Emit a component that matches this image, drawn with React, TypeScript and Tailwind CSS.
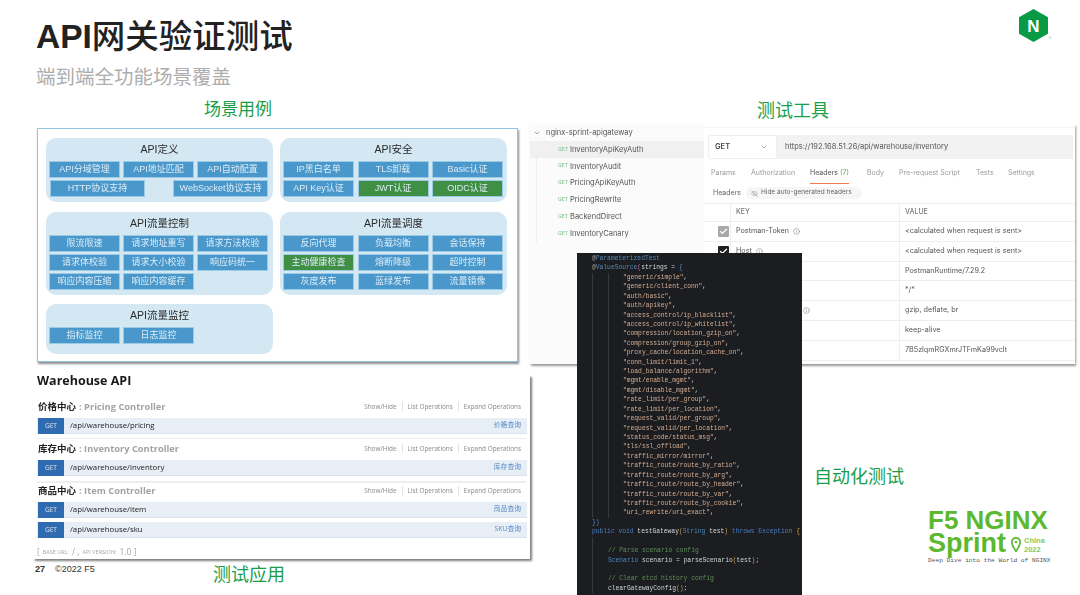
import { ChevronDown, Check, Info, EyeOff } from "lucide-react";

const cjk = "font-['Liberation_Sans','Noto_Sans_CJK_SC',sans-serif]";
const openSans = "font-['Open_Sans','Noto_Sans_CJK_SC',sans-serif]";

type Chip = { label: string; green?: boolean };

function ChipBox({ label, green, wide }: Chip & { wide?: boolean }) {
  return (
    <div
      className={`h-[17px] flex items-center justify-center border border-[#9ccbe6] text-[9px] text-[#dcecf6] whitespace-nowrap ${
        green ? "bg-[#3f8f44] text-[#d8ecd8]" : "bg-[#4a98cb]"
      } ${wide ? "w-[95px]" : ""}`}
    >
      {label}
    </div>
  );
}

function Group({ title, className, children }: { title: string; className: string; children: React.ReactNode }) {
  return (
    <div className={`rounded-[10px] bg-[#d4e8f4] ${className}`}>
      <div className="h-[23px] flex items-center justify-center text-[10.5px] text-[#2a2a2a]">{title}</div>
      {children}
    </div>
  );
}

function Grid({ items, right }: { items: Chip[]; right?: boolean }) {
  return (
    <div
      className={`grid grid-cols-[repeat(3,71px)] gap-y-[2px] ${
        right ? "gap-x-[3.5px] pl-[3px]" : "gap-x-[3px] pl-[3px]"
      }`}
    >
      {items.map((c) => (
        <ChipBox key={c.label} {...c} />
      ))}
    </div>
  );
}

function Diagram() {
  return (
    <div className="w-[481px] h-[234px] border border-[#8fc4e2] bg-white shadow-[1px_2px_2px_rgba(0,0,0,0.45)] flex gap-[7px] pl-[8px] pt-[9px] blur-[0.3px]">
      <div className="w-[227px] flex flex-col">
        <Group title="API定义" className="h-[64px]">
          <Grid items={[{ label: "API分域管理" }, { label: "API地址匹配" }, { label: "API自动配置" }]} />
          <div className="flex justify-between w-[218px] ml-[4px] mt-[2px]">
            <ChipBox label="HTTP协议支持" wide />
            <ChipBox label="WebSocket协议支持" wide />
          </div>
        </Group>
        <Group title="API流量控制" className="h-[83px] mt-[10px]">
          <Grid
            items={[
              { label: "限流限速" },
              { label: "请求地址重写" },
              { label: "请求方法校验" },
              { label: "请求体校验" },
              { label: "请求大小校验" },
              { label: "响应码统一" },
              { label: "响应内容压缩" },
              { label: "响应内容缓存" },
            ]}
          />
        </Group>
        <Group title="API流量监控" className="h-[50px] mt-[9px]">
          <Grid items={[{ label: "指标监控" }, { label: "日志监控" }]} />
        </Group>
      </div>
      <div className="w-[227px] flex flex-col">
        <Group title="API安全" className="h-[64px]">
          <Grid
            right
            items={[
              { label: "IP黑白名单" },
              { label: "TLS卸载" },
              { label: "Basic认证" },
              { label: "API Key认证" },
              { label: "JWT认证", green: true },
              { label: "OIDC认证", green: true },
            ]}
          />
        </Group>
        <Group title="API流量调度" className="h-[83px] mt-[10px]">
          <Grid
            right
            items={[
              { label: "反向代理" },
              { label: "负载均衡" },
              { label: "会话保持" },
              { label: "主动健康检查", green: true },
              { label: "熔断降级" },
              { label: "超时控制" },
              { label: "灰度发布" },
              { label: "蓝绿发布" },
              { label: "流量镜像" },
            ]}
          />
        </Group>
      </div>
    </div>
  );
}

function ApiRow({ path, link, className = "" }: { path: string; link: string; className?: string }) {
  return (
    <div className={`h-[16px] ml-[4px] mr-[3px] bg-[#e7eef5] border-b border-[#d8e3ee] flex items-center ${className}`}>
      <div className="w-[26px] h-[16px] ml-px bg-[#2f6bb0] text-[#dce6f2] text-[6.5px] flex items-center justify-center">
        GET
      </div>
      <span className="ml-[6px] text-[7.8px] text-[#222]">{path}</span>
      <span className="ml-auto mr-[6px] text-[6.8px] text-[#5a8bc8]">{link}</span>
    </div>
  );
}

function ApiHeading({ cn, en, className = "" }: { cn: string; en: string; className?: string }) {
  return (
    <div className={`h-[14px] ml-[5px] mr-[9px] flex items-center ${className}`}>
      <span className="text-[9.5px] font-bold text-[#222]">{cn}</span>
      <span className="text-[9.3px] font-bold text-[#a3a3a3] ml-[3px]">: {en}</span>
      <div className="ml-auto flex items-center text-[6.4px] text-[#8a8a8a]">
        <span>Show/Hide</span>
        <span className="w-px h-[9px] bg-[#e2e2e2] mx-[5px]" />
        <span>List Operations</span>
        <span className="w-px h-[9px] bg-[#e2e2e2] mx-[5px]" />
        <span>Expand Operations</span>
      </div>
    </div>
  );
}

function Swagger() {
  return (
    <div className={`-ml-[4px] mt-[13px] w-[497px] h-[184px] bg-white shadow-[2px_2px_2px_rgba(0,0,0,0.5)] blur-[0.3px] ${openSans}`}>
      <div className="h-[12px] ml-[4px] flex items-center text-[12.5px] font-bold text-[#1a1a1a]">Warehouse API</div>
      <ApiHeading cn="价格中心" en="Pricing Controller" className="mt-[13px]" />
      <ApiRow path="/api/warehouse/pricing" link="价格查询" className="mt-[4px]" />
      <div className="h-px mt-[4px] mx-[4px] bg-[#eeeeee]" />
      <ApiHeading cn="库存中心" en="Inventory Controller" className="mt-[3px]" />
      <ApiRow path="/api/warehouse/inventory" link="库存查询" className="mt-[4px]" />
      <div className="h-[2px] mt-[5px] mx-[4px] bg-[#eeeeee]" />
      <ApiHeading cn="商品中心" en="Item Controller" className="mt-px" />
      <ApiRow path="/api/warehouse/item" link="商品查询" className="mt-[4px]" />
      <ApiRow path="/api/warehouse/sku" link="SKU查询" className="mt-[4px]" />
      <div className="ml-[4px] mt-[8px] h-[12px] flex items-center text-[#a8a8a8] text-[8.5px] gap-[3px]">
        <span>[</span>
        <span className="text-[5.5px] uppercase">Base URL:</span>
        <span>/ ,</span>
        <span className="text-[5.5px] uppercase">API Version:</span>
        <span>1.0 ]</span>
      </div>
    </div>
  );
}

const requests = [
  "InventoryApiKeyAuth",
  "InventoryAudit",
  "PricingApiKeyAuth",
  "PricingRewrite",
  "BackendDirect",
  "InventoryCanary",
];

const tabs = [
  { label: "Params", w: "w-[40px]" },
  { label: "Authorization", w: "w-[59px]" },
  { label: "Headers", w: "w-[57px]", active: true },
  { label: "Body", w: "w-[32px]" },
  { label: "Pre-request Script", w: "w-[77px]" },
  { label: "Tests", w: "w-[32px]" },
  { label: "Settings", w: "w-[40px]" },
];

const headerRows = [
  { key: "Postman-Token", value: "<calculated when request is sent>", check: "gray" },
  { key: "Host", value: "<calculated when request is sent>", check: "black" },
  { value: "PostmanRuntime/7.29.2" },
  { value: "*/*" },
  { value: "gzip, deflate, br", info: true },
  { value: "keep-alive" },
  { value: "7B5zlqmRGXmrJTFmKa99vclt" },
];

function Postman() {
  return (
    <div className="mt-[2px] w-[545px] h-[240px] flex font-['Inter',sans-serif] shadow-[1px_2px_2px_rgba(0,0,0,0.4)] bg-white blur-[0.3px]">
      <div className="w-[174px] bg-[#fbfbfb]">
        <div className="h-[17px] flex items-center pl-[3px] text-[7.5px] text-[#555]">
          <ChevronDown size={8} className="text-[#777]" />
          <span className="ml-[5px]">nginx-sprint-apigateway</span>
        </div>
        <div className="border-l border-[#eeeeee] ml-[6px]">
          {requests.map((r, i) => (
            <div
              key={r}
              className={`h-[16.8px] -ml-[7px] pl-[28px] flex items-center ${i === 0 ? "bg-[#f0f0f0]" : ""}`}
            >
              <span className="text-[5px] text-[#8fc79a] font-semibold w-[12px]">GET</span>
              <span className="text-[7.5px] text-[#555]">{r}</span>
            </div>
          ))}
        </div>
      </div>
      <div className="w-[371px] pt-[3px]">
        <div className="border-t border-[#f3f3f3] h-[8px]" />
        <div className="flex h-[24px] ml-[4px] mr-[2px] text-[7.5px]">
          <div className="w-[69px] border border-[#eeeeee] rounded-l-[3px] flex items-center justify-between pl-[6px] pr-[8px] font-semibold text-[#444]">
            GET
            <ChevronDown size={8} className="text-[#888]" />
          </div>
          <div className="flex-1 bg-[#f2f2f2] flex items-center pl-[8px] text-[#555]">
            https://192.168.51.26/api/warehouse/inventory
          </div>
        </div>
        <div className="flex h-[21px] mt-[4px] ml-[7px] text-[7px] text-[#9a9a9a]">
          {tabs.map((t) => (
            <div key={t.label} className={t.w}>
              <div className={`h-[21px] w-fit flex items-center ${t.active ? "border-b border-[#f07c4b] text-[#555]" : ""}`}>
                {t.label}
                {t.active && <span className="text-[#5fa86a] ml-[2px]">(7)</span>}
              </div>
            </div>
          ))}
        </div>
        <div className="h-[14px] mt-[2px] ml-[9px] flex items-center text-[7px]">
          <span className="text-[#666]">Headers</span>
          <div className="ml-[5px] w-[116px] h-[12px] rounded-full bg-[#f6f6f6] flex items-center pl-[5px] text-[#666] text-[6.5px]">
            <EyeOff size={7} className="text-[#999] mr-[3px]" />
            Hide auto-generated headers
          </div>
        </div>
        <div className="mt-[3px] border-y border-[#eeeeee] h-[19px] grid grid-cols-[26px_169px_1fr] text-[7px] font-medium text-[#777]">
          <div />
          <div className="border-l border-[#eeeeee] pl-[5px] flex items-center">KEY</div>
          <div className="border-l border-[#eeeeee] pl-[5px] flex items-center">VALUE</div>
        </div>
        {headerRows.map((row) => (
          <div key={row.value + row.key} className="h-[19.8px] border-b border-[#eeeeee] grid grid-cols-[26px_169px_1fr] text-[7.2px] text-[#555]">
            <div className="flex items-center justify-end pr-px">
              {row.check && (
                <div className={`w-[11px] h-[11px] rounded-[1px] flex items-center justify-center ${row.check === "gray" ? "bg-[#a8a8a8]" : "bg-[#222]"}`}>
                  <Check size={9} strokeWidth={3.5} className="text-white" />
                </div>
              )}
            </div>
            <div className="border-l border-[#eeeeee] pl-[5px] flex items-center">
              {row.key}
              {row.key && <Info size={7} className="ml-[4px] text-[#888]" />}
              {row.info && <Info size={7} className="ml-[67px] text-[#888]" />}
            </div>
            <div className="border-l border-[#eeeeee] pl-[5px] flex items-center">{row.value}</div>
          </div>
        ))}
      </div>
    </div>
  );
}

const scenarios = [
  "generic/simple",
  "generic/client_conn",
  "auth/basic",
  "auth/apikey",
  "access_control/ip_blacklist",
  "access_control/ip_whitelist",
  "compression/location_gzip_on",
  "compression/group_gzip_on",
  "proxy_cache/location_cache_on",
  "conn_limit/limit_1",
  "load_balance/algorithm",
  "mgmt/enable_mgmt",
  "mgmt/disable_mgmt",
  "rate_limit/per_group",
  "rate_limit/per_location",
  "request_valid/per_group",
  "request_valid/per_location",
  "status_code/status_msg",
  "tls/ssl_offload",
  "traffic_mirror/mirror",
  "traffic_route/route_by_ratio",
  "traffic_route/route_by_arg",
  "traffic_route/route_by_header",
  "traffic_route/route_by_var",
  "traffic_route/route_by_cookie",
  "uri_rewrite/uri_exact",
];

function CodePanel() {
  return (
    <div className="absolute left-[47px] top-[253px] w-[225px] h-[342px] overflow-hidden bg-[#1c1d20] pl-[15px] pt-[1px] font-['Liberation_Mono',monospace] text-[6.3px] leading-[9.42px] text-[#d2d4d8] whitespace-pre blur-[0.2px]">
      <div className="text-[#5a86b5]"><span className="text-[#9a9a8a]">@</span>ParameterizedTest</div>
      <div>
        <span className="text-[#9a9a8a]">@</span>
        <span className="text-[#5a86b5]">ValueSource</span>
        <span className="text-[#c678a0]">(</span>strings = <span className="text-[#4a90d9]">{"{"}</span>
      </div>
      <div className="border-l border-[#38393c]">
        <div className="ml-[15px] border-l border-[#38393c] pl-[14px] text-[#d4ae94]">
          {scenarios.map((s) => (
            <div key={s}>
              "{s}"<span className="text-[#d2d4d8]">,</span>
            </div>
          ))}
        </div>
      </div>
      <div className="text-[#4a90d9]">{"})"}</div>
      <div>
        <span className="text-[#4a7fc0]">public void </span>testGateway<span className="text-[#c9a040]">(</span>
        <span className="text-[#4a86b8]">String</span> test<span className="text-[#c9a040]">)</span>
        <span className="text-[#4a7fc0]"> throws Exception </span>
        <span className="text-[#c9a040]">{"{"}</span>
      </div>
      <div className="border-l border-[#38393c] pl-[15px]">
        <div>&nbsp;</div>
        <div className="text-[#5f8f5a]">// Parse scenario config</div>
        <div>
          <span className="text-[#4a86b8]">Scenario</span> scenario = parseScenario<span className="text-[#c9a040]">(</span>test<span className="text-[#c9a040]">)</span>;
        </div>
        <div>&nbsp;</div>
        <div className="text-[#5f8f5a]">// Clear etcd history config</div>
        <div>clearGatewayConfig<span className="text-[#c9a040]">()</span>;</div>
      </div>
    </div>
  );
}

function F5Logo() {
  return (
    <div className="ml-[398px] mt-[21px] w-[124px] text-[#5cb82e] font-['Liberation_Sans',sans-serif] font-bold">
      <div className="h-[20px] leading-[20px] text-[26px] whitespace-nowrap">F5 NGINX</div>
      <div className="h-[25px] mt-[1px] flex items-center">
        <span className="text-[27px] leading-[25px]">Sprint</span>
        <svg viewBox="0 0 10 15" className="w-[10px] h-[15px] ml-[5px] mt-[2px]">
          <path
            d="M5 0.8a4.2 4.2 0 0 0-4.2 4.2c0 2.8 4.2 9.4 4.2 9.4s4.2-6.6 4.2-9.4A4.2 4.2 0 0 0 5 0.8z"
            fill="none"
            stroke="#5cb82e"
            strokeWidth="1.7"
          />
          <circle cx="5" cy="5" r="1.3" fill="#5cb82e" />
        </svg>
        <div className="ml-[3px] mt-[3px] text-[7.5px] leading-[9px] text-[#85c95f]">
          <div>China</div>
          <div>2022</div>
        </div>
      </div>
      <div className="h-[10px] font-['Liberation_Mono',monospace] font-normal text-[6.2px] text-[#555] whitespace-pre leading-[10px]">
        Deep Dive into the World of NGINX
      </div>
    </div>
  );
}

export default function App() {
  return (
    <div className={`relative w-[1080px] h-[595px] overflow-hidden bg-white flex ${cjk}`}>
      <div className="w-[530px] shrink-0 pl-[37px] pt-[17px]">
        <h1 className="-ml-[1px] h-[40px] leading-[40px] text-[33.5px] font-bold text-[#222] whitespace-nowrap">
          API<span className="font-medium">网关验证测试</span>
        </h1>
        <div className="-ml-[1px] mt-[8px] h-[24px] leading-[24px] text-[19.5px] text-[#adadad]">端到端全功能场景覆盖</div>
        <div className="mt-[9px] ml-[167px] h-[24px] leading-[24px] text-[17px] text-[#1a9e4a]">场景用例</div>
        <div className="mt-[6px]">
          <Diagram />
        </div>
        <Swagger />
        <div className="-ml-[2px] mt-[4px] flex items-start">
          <div className="h-[14px] flex items-center text-[9px] text-[#333] w-[60px]">
            <span className="font-bold w-[20px]">27</span>
            <span>©2022 F5</span>
          </div>
          <div className="ml-[118px] h-[24px] leading-[24px] text-[18px] text-[#1a9e4a]">测试应用</div>
        </div>
      </div>
      <div className="relative w-[550px] shrink-0">
        <div className="h-[42px] pt-[9px] flex justify-end pr-[28px]">
          <svg viewBox="0 0 33 33" className="w-[33px] h-[33px]">
            <polygon points="14.5,0 29,8.2 29,24.8 14.5,33 0,24.8 0,8.2" fill="#0a9a46" />
            <text x="14.5" y="22.5" textAnchor="middle" fontSize="17" fontWeight="700" fill="#fff" fontFamily="Liberation Sans">
              N
            </text>
            <text x="29.5" y="30" fontSize="4" fill="#999" fontFamily="Liberation Sans">
              ®
            </text>
          </svg>
        </div>
        <div className="mt-[57px] ml-[227px] h-[24px] leading-[24px] text-[18px] text-[#1a9e4a]">测试工具</div>
        <div className="-mt-[1px]">
          <Postman />
        </div>
        <div className="mt-[101px] ml-[284px] h-[24px] leading-[24px] text-[18px] text-[#1a9e4a]">自动化测试</div>
        <F5Logo />
        <CodePanel />
      </div>
    </div>
  );
}
